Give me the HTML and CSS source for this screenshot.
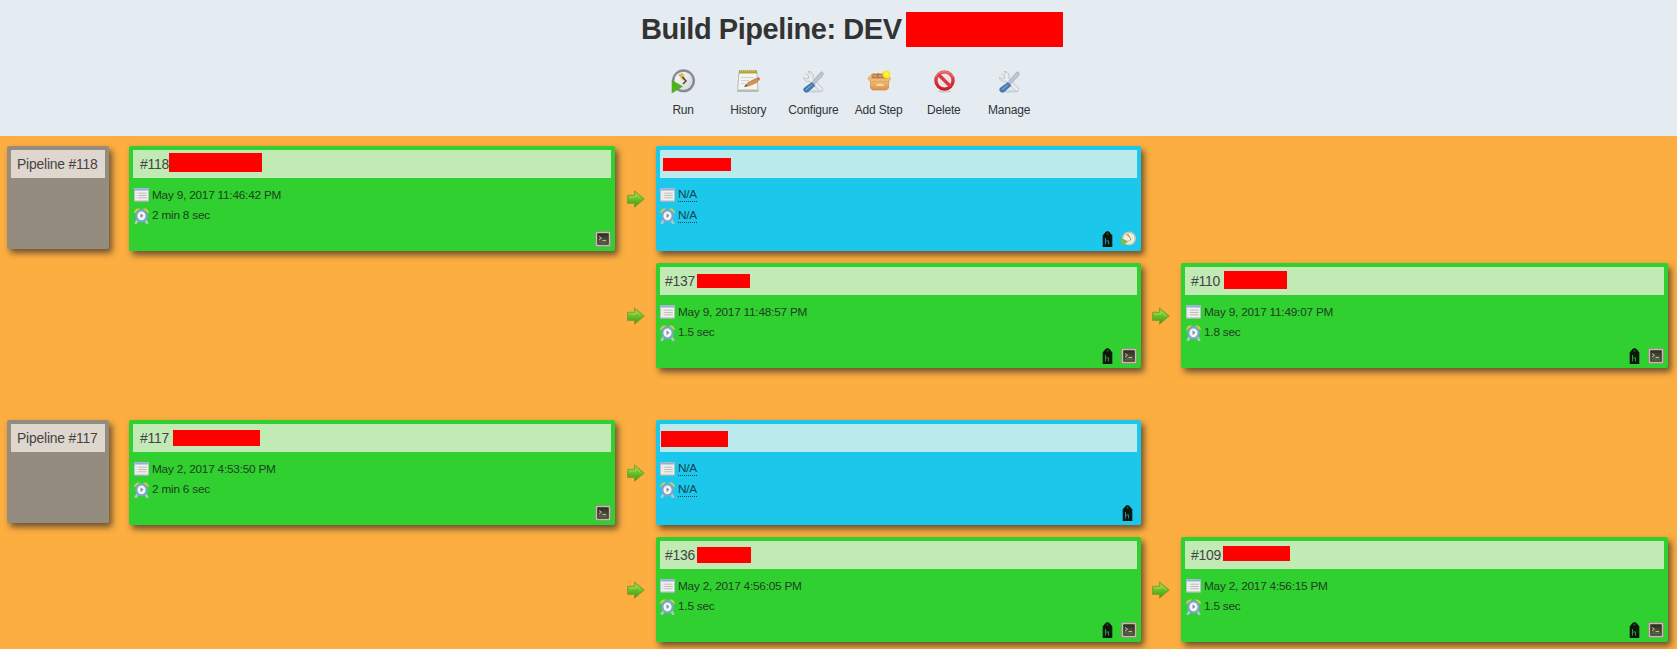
FILE: index.html
```
<!DOCTYPE html>
<html lang="en">
<head>
<meta charset="utf-8">
<title>Build Pipeline: DEV</title>
<link rel="stylesheet" href="styles.css">
</head>
<body>
<svg class="defs" aria-hidden="true">
  <defs>
    <linearGradient id="steel" x1="0" y1="0" x2="1" y2="1"><stop offset="0" stop-color="#8b8b99"/><stop offset="1" stop-color="#8585a0"/></linearGradient>
    <linearGradient id="face" x1="0" y1="0" x2="1" y2="1"><stop offset="0" stop-color="#fff"/><stop offset="1" stop-color="#d2d2cc"/></linearGradient>
    <linearGradient id="leaf" x1="0" y1="0" x2="0" y2="1"><stop offset="0" stop-color="#8fcf3a"/><stop offset=".5" stop-color="#6cc02a"/><stop offset="1" stop-color="#3d9413"/></linearGradient>
    <linearGradient id="box" x1="0" y1="0" x2="0" y2="1"><stop offset="0" stop-color="#f8c27d"/><stop offset="1" stop-color="#d99445"/></linearGradient>
    <linearGradient id="red" x1="0" y1="0" x2="0" y2="1"><stop offset="0" stop-color="#e25656"/><stop offset="1" stop-color="#cc1a22"/></linearGradient>
    <linearGradient id="screen" x1="0" y1="0" x2="0" y2="1"><stop offset="0" stop-color="#2b2d22"/><stop offset="1" stop-color="#66694c"/></linearGradient>
    <symbol id="i-run" viewBox="0 0 24 24">
      <circle cx="12.500" cy="11.800" r="10.300" fill="url(#face)" stroke="url(#steel)" stroke-width="2.400"/>
      <path d="M7 5.500l5-1.500 2 6.500-2 1z" fill="#e5b45a"/>
      <path d="M11.500 8l3.500 4-3 3" fill="none" stroke="#4a4a44" stroke-width="1.500"/>
      <path d="M1 11.500L11.500 17.400 1 24z" fill="#4db51b" stroke="#52a42e" stroke-width=".6"/>
    </symbol>
    <symbol id="i-history" viewBox="0 0 24 24">
      <path d="M3 3h18l1 19.500H1.500z" fill="#f4f4f3" stroke="#bcbcb8"/>
      <path d="M1.500 20.500h21v2h-21z" fill="#b9b9b4"/>
      <path d="M3 1.200h18v3.300H3z" fill="#b1a344"/>
      <path d="M4 2h16" stroke="#d8cf74" stroke-dasharray="1 1"/>
      <path d="M5 8.500h13M5 11.500h8M5 14.500h4" stroke="#d2d2d2"/>
      <path d="M8.500 17.500l3.500-4 8.500-4.200 2 2-2 2.300-8 3.400z" fill="#d6964c" stroke="#a06b35" stroke-width=".6"/>
      <path d="M8.500 17.500l1.600-2 1.200 1.500z" fill="#443a2c"/>
      <path d="M20.500 9.200l2.500-1.200 1 2.200-1.500 1.600z" fill="#da6b4a"/>
    </symbol>
    <symbol id="i-tools" viewBox="0 0 24 24">
      <ellipse cx="13" cy="22.500" rx="9" ry="1.200" fill="#ccd1d8"/>
      <path d="M4.500 4.500l2.800 1.800.5 2.700-2.500 1L2.500 8.500C2.500 11.500 5.500 13 8.500 12L18 21.500c2 2 5-.2 3.200-2.500L12 9.500C13 5.500 10.500 2 7 2.500l2 2.500" fill="#ebebed" stroke="#b3b5bb" stroke-width=".8"/>
      <path d="M20.500 2.500l2 2-2 3.500-7 7-2-2 6-7.500z" fill="#c0c7d4" stroke="#98a2b4" stroke-width=".7"/>
      <path d="M11 13.500l3 3-6.500 6c-3 2-6-.8-4.200-3.500z" fill="#4a7cba" stroke="#34629f" stroke-width=".7"/>
      <path d="M10.800 15.800l-5.800 5" stroke="#8cb3df"/>
    </symbol>
    <symbol id="i-box" viewBox="0 0 24 24">
      <path d="M3.500 11h18v8l-2 2H5.500l-2-2z" fill="url(#box)" stroke="#c88a48" stroke-width=".7"/>
      <path d="M6 4h13l2 5.500H4z" fill="#b07a48"/>
      <path d="M6.500 4.500h10M6 7h12" stroke="#efbd82" stroke-width="1.100" stroke-dasharray="4 1.500"/>
      <path d="M5 5L.8 9.500 3 12.500h19l2-3-3-3.500-1 3.500H4.500z" fill="#f1b774" stroke="#d0914d" stroke-width=".5"/>
      <path d="M9.500 16h7" stroke="#f8dcb0" stroke-width="2"/>
      <circle cx="19.500" cy="5.300" r="3.900" fill="#f7e91c"/><circle cx="19.500" cy="5.300" r="1.800" fill="#fff75e"/>
    </symbol>
    <symbol id="i-delete" viewBox="0 0 24 24">
      <ellipse cx="12.500" cy="22.300" rx="7" ry="1.200" fill="#c6cad0"/>
      <circle cx="12.500" cy="11.500" r="8.600" fill="#f0e2e6" stroke="url(#red)" stroke-width="3.400"/>
      <path d="M6.500 5.500l12 12" stroke="#d83c42" stroke-width="3.400"/>
      <path d="M4 8c2-6 13-8 17 0" fill="none" stroke="#ee8f8f" stroke-width=".8"/>
    </symbol>
    <symbol id="i-calendar" viewBox="0 0 16 14" preserveAspectRatio="none">
      <path d="M.5 .5h15v12.500H.5z" fill="#edf0f0" stroke="#b9c3c8"/>
      <path d="M.5 .5h15v2H.5z" fill="#93aed6"/>
      <path d="M4.500 5.200h9M4.500 7.500h9M4.500 9.800h9" stroke="#bdb2a4" stroke-width=".9"/>
      <path d="M2 5.200h1.500M2 7.500h1.500M2 9.800h1.500" stroke="#d5d5d5" stroke-width=".9"/>
      <path d="M.3 13.300h15.400" stroke="#a9b3ab" stroke-width="1"/>
    </symbol>
    <symbol id="i-clock" viewBox="0 0 16 16" preserveAspectRatio="none">
      <path d="M.2 5.500C0 1.500 3 0 6.500 .5zM15.800 5.500C16 1.500 13 0 9.500 .5z" fill="#e6c845"/>
      <path d="M4 12l-2 3M12 12l2 3" stroke="#b6c3c8" stroke-width="2.800" stroke-linecap="round"/>
      <circle cx="8" cy="7.800" r="5.500" fill="#f3f5f9" stroke="#79a6cf" stroke-width="2.300"/>
      <path d="M7 5.200l3 2.500L7 10z" fill="#85888d"/>
    </symbol>
    <symbol id="i-terminal" viewBox="0 0 16 16">
      <rect x=".4" y=".4" width="15.200" height="15.200" rx="1.500" fill="#c2bfae" stroke="#8f8f78" stroke-width=".8"/>
      <rect x="2.800" y="2.800" width="10.400" height="10.400" fill="url(#screen)" stroke="#2d2f22"/>
      <path d="M4 5.500l2.500 1.700L4 9M7.500 9.500H11" fill="none" stroke="#b9bc9c" stroke-width="1"/>
    </symbol>
    <symbol id="i-tag" viewBox="0 0 11 16">
      <path d="M5.500 0L7.500 1 10.300 4.500V16H.7V4.500L3.500 1z" fill="#0c170c"/>
      <circle cx="5.500" cy="2.800" r="1" fill="#3c4a3a"/>
      <path d="M3.500 7v6.500M3.500 10h3v3.500" fill="none" stroke="currentColor" stroke-width="1.100"/>
    </symbol>
    <symbol id="i-rerun" viewBox="0 0 16 16">
      <circle cx="8" cy="7.500" r="6.300" fill="#efefdf" stroke="#c3c6b3" stroke-width="1.500"/>
      <path d="M4.500 3.500l3-1 1.500 4z" fill="#d9b15a"/>
      <path d="M7 4l3 4-2 2.500" fill="none" stroke="#95958a"/>
      <path d="M.3 7L7.500 10.500.5 14.500z" fill="#86bb35"/>
    </symbol>
    <symbol id="i-arrow" viewBox="0 0 18 18">
      <path d="M.5 5.300H7.500V.8L17.300 9 7.500 17.300V13.500H.5z" fill="url(#leaf)" stroke="#8a9c24" stroke-width=".9"/>
      <path d="M2 7h7V4.500l4.500 4" fill="none" stroke="#a9da5e" stroke-width=".9"/>
    </symbol>
  </defs>
</svg>

<header class="header">
  <div class="heading"><h1>Build Pipeline: DEV</h1><span class="heading-mask"></span></div>
  <nav class="toolbar">
    <a class="tool"><svg><use href="#i-run"/></svg><span>Run</span></a>
    <a class="tool"><svg><use href="#i-history"/></svg><span>History</span></a>
    <a class="tool"><svg><use href="#i-tools"/></svg><span>Configure</span></a>
    <a class="tool"><svg><use href="#i-box"/></svg><span>Add Step</span></a>
    <a class="tool"><svg><use href="#i-delete"/></svg><span>Delete</span></a>
    <a class="tool"><svg><use href="#i-tools"/></svg><span>Manage</span></a>
  </nav>
</header>

<main class="board">
  <section class="pipeline">
    <div class="revision"><div class="title">Pipeline #118</div></div>
    <article class="card c1">
      <div class="title">#118<i class="mask m118"></i></div>
      <div class="line"><svg class="cal"><use href="#i-calendar"/></svg><span>May 9, 2017 11:46:42 PM</span></div>
      <div class="line"><svg class="clk"><use href="#i-clock"/></svg><span>2 min 8 sec</span></div>
      <div class="actions"><svg class="term"><use href="#i-terminal"/></svg></div>
    </article>
    <svg class="arrow a1"><use href="#i-arrow"/></svg>
    <article class="card pending c2">
      <div class="title"><i class="mask mna1"></i></div>
      <div class="line"><svg class="cal"><use href="#i-calendar"/></svg><span class="na">N/A</span></div>
      <div class="line"><svg class="clk"><use href="#i-clock"/></svg><span class="na">N/A</span></div>
      <div class="actions"><svg class="tag"><use href="#i-tag"/></svg><svg class="term"><use href="#i-rerun"/></svg></div>
    </article>
    <svg class="arrow a2"><use href="#i-arrow"/></svg>
    <article class="card c3">
      <div class="title">#137<i class="mask m137"></i></div>
      <div class="line"><svg class="cal"><use href="#i-calendar"/></svg><span>May 9, 2017 11:48:57 PM</span></div>
      <div class="line"><svg class="clk"><use href="#i-clock"/></svg><span>1.5 sec</span></div>
      <div class="actions"><svg class="tag"><use href="#i-tag"/></svg><svg class="term"><use href="#i-terminal"/></svg></div>
    </article>
    <svg class="arrow a3"><use href="#i-arrow"/></svg>
    <article class="card c4">
      <div class="title">#110<i class="mask m110"></i></div>
      <div class="line"><svg class="cal"><use href="#i-calendar"/></svg><span>May 9, 2017 11:49:07 PM</span></div>
      <div class="line"><svg class="clk"><use href="#i-clock"/></svg><span>1.8 sec</span></div>
      <div class="actions"><svg class="tag"><use href="#i-tag"/></svg><svg class="term"><use href="#i-terminal"/></svg></div>
    </article>
  </section>

  <section class="pipeline">
    <div class="revision"><div class="title">Pipeline #117</div></div>
    <article class="card c1">
      <div class="title">#117<i class="mask m117"></i></div>
      <div class="line"><svg class="cal"><use href="#i-calendar"/></svg><span>May 2, 2017 4:53:50 PM</span></div>
      <div class="line"><svg class="clk"><use href="#i-clock"/></svg><span>2 min 6 sec</span></div>
      <div class="actions"><svg class="term"><use href="#i-terminal"/></svg></div>
    </article>
    <svg class="arrow a1"><use href="#i-arrow"/></svg>
    <article class="card pending c2">
      <div class="title"><i class="mask mna2"></i></div>
      <div class="line"><svg class="cal"><use href="#i-calendar"/></svg><span class="na">N/A</span></div>
      <div class="line"><svg class="clk"><use href="#i-clock"/></svg><span class="na">N/A</span></div>
      <div class="actions"><svg class="tag"><use href="#i-tag"/></svg></div>
    </article>
    <svg class="arrow a2"><use href="#i-arrow"/></svg>
    <article class="card c3">
      <div class="title">#136<i class="mask m136"></i></div>
      <div class="line"><svg class="cal"><use href="#i-calendar"/></svg><span>May 2, 2017 4:56:05 PM</span></div>
      <div class="line"><svg class="clk"><use href="#i-clock"/></svg><span>1.5 sec</span></div>
      <div class="actions"><svg class="tag"><use href="#i-tag"/></svg><svg class="term"><use href="#i-terminal"/></svg></div>
    </article>
    <svg class="arrow a3"><use href="#i-arrow"/></svg>
    <article class="card c4">
      <div class="title">#109<i class="mask m109"></i></div>
      <div class="line"><svg class="cal"><use href="#i-calendar"/></svg><span>May 2, 2017 4:56:15 PM</span></div>
      <div class="line"><svg class="clk"><use href="#i-clock"/></svg><span>1.5 sec</span></div>
      <div class="actions"><svg class="tag"><use href="#i-tag"/></svg><svg class="term"><use href="#i-terminal"/></svg></div>
    </article>
  </section>
</main>
</body>
</html>
```
FILE: styles.css
```
* { box-sizing: border-box; }
body {
  margin: 0;
  height: 649px;
  overflow: hidden;
  background: #fcae40;
  color: #333;
  font-family: "Liberation Sans", Arial, sans-serif;
}
svg { display: block; flex: none; }
.defs { position: absolute; width: 0; height: 0; }

.header { height: 136px; padding-top: 12px; background: #e4ecf2; }
.heading { display: flex; gap: 4px; padding-left: 641px; height: 35px; }
h1 { margin: 0; width: 261px; font-size: 29px; letter-spacing: -.45px; line-height: 34px; white-space: nowrap; }
.heading-mask { width: 157px; height: 35px; background: #f00; }
.toolbar { display: flex; padding: 22px 0 0 650.5px; }
.tool { width: 65.2px; display: flex; flex-direction: column; align-items: center; gap: 10px; font-size: 12px; letter-spacing: -.2px; line-height: 15px; white-space: nowrap; }
.tool svg { width: 24px; height: 24px; }

.board { height: 513px; padding: 10px 0 0 7px; overflow: hidden; }
.pipeline {
  display: grid;
  grid-template-columns: 102px 20px 486px 41px 485px 40px 487px;
  grid-template-rows: 105px 105px;
  row-gap: 12px;
  height: 274px;
  align-content: start;
}
.revision, .card {
  padding: 4px 4px 3px;
  border-radius: 2px;
  box-shadow: 3px 4px 6px rgba(60, 50, 40, .75);
}
.revision { grid-column: 1; grid-row: 1; height: 103px; background: #958c80; }
.card { display: flex; flex-direction: column; background: #30d030; }
.pending { background: #1bc8ec; }
.c1 { grid-column: 3; grid-row: 1; }
.c2 { grid-column: 5; grid-row: 1; }
.c3 { grid-column: 5; grid-row: 2; }
.c4 { grid-column: 7; grid-row: 2; }
.title {
  position: relative;
  height: 28px;
  margin-bottom: 7px;
  padding-left: 6px;
  background: #c2eab5;
  color: #444;
  font-size: 13.9px;
  letter-spacing: -.2px;
  line-height: 29px;
  white-space: nowrap;
}
.revision .title { background: #dfd7ce; }
.c1 .title { padding-left: 7px; }
.c3 .title { padding-left: 5px; }
.pending .title { background: #baeaec; }
.line { display: flex; align-items: center; gap: 3px; height: 20.5px; font-size: 11.8px; letter-spacing: -.22px; line-height: 15px; color: #1e401e; }
.c1 .line, .c4 .line { padding-left: .5px; gap: 3.5px; }
.pending .line { color: #174451; }
.cal { width: 15px; height: 14px; }
.clk { width: 15px; height: 16px; }
.na { line-height: 13px; border-bottom: 1px dotted #174451; }
.actions { display: flex; justify-content: flex-end; gap: 8px; margin-top: auto; padding-bottom: 1px; }
.term { width: 16px; height: 16px; }
.tag { width: 11px; height: 16px; color: #36923a; }
.pending .tag { color: #1a87a0; }
.pending .tag:last-child { margin-right: 4px; }

.arrow { width: 18px; height: 18px; align-self: center; justify-self: center; }
.a1 { grid-column: 4; grid-row: 1; }
.a2 { grid-column: 4; grid-row: 2; }
.a3 { grid-column: 6; grid-row: 2; }

/* Solid bars covering job names */
.mask { position: absolute; background: #f00; }
.m118 { left: 36px; top: 3px; width: 93px; height: 19px; }
.mna1 { left: 3px; top: 8px; width: 68px; height: 13px; }
.m137 { left: 37px; top: 7px; width: 53px; height: 14px; }
.m110 { left: 39px; top: 4px; width: 63px; height: 18px; }
.m117 { left: 40px; top: 6px; width: 87px; height: 16px; }
.mna2 { left: 1px; top: 7px; width: 67px; height: 16px; }
.m136 { left: 37px; top: 6px; width: 54px; height: 16px; }
.m109 { left: 38px; top: 5px; width: 67px; height: 15px; }
```
